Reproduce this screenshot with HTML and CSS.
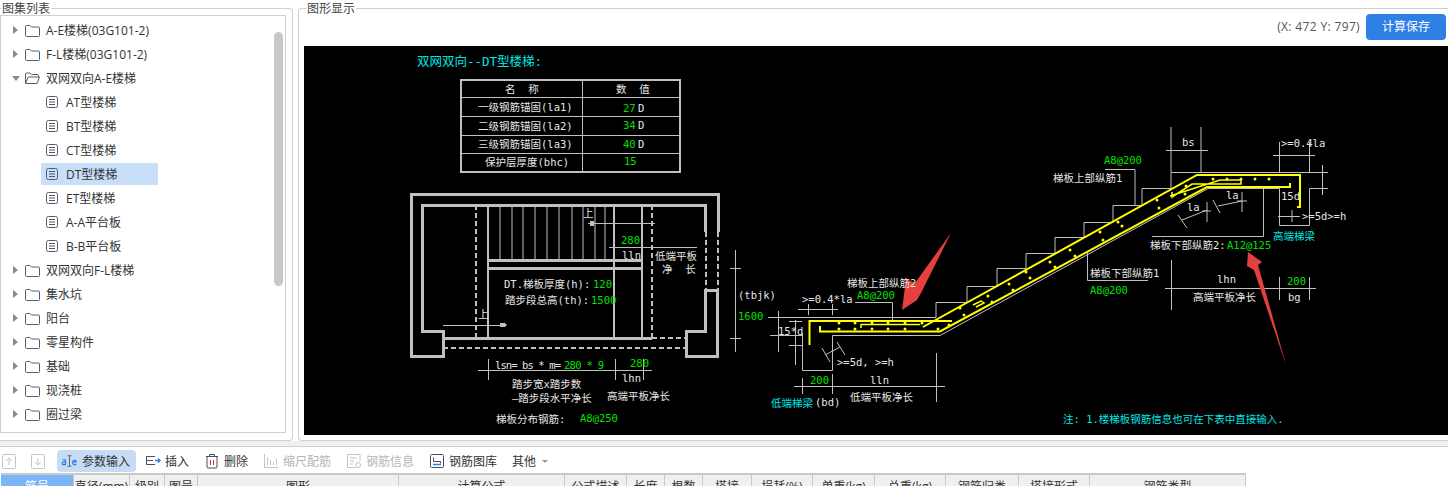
FILE: index.html
```html
<!DOCTYPE html>
<html lang="zh-CN">
<head>
<meta charset="utf-8">
<title>图集列表</title>
<link rel="stylesheet" href="styles.css">
</head>
<body>
<svg class="defs" aria-hidden="true">
  <symbol id="folder" viewBox="0 0 15 13"><path d="M.5 2.5a1 1 0 0 1 1-1H5l1.5 1.5h7a1 1 0 0 1 1 1v7.500a1 1 0 0 1-1 1h-12a1 1 0 0 1-1-1z" fill="none" stroke="#555a6a"/></symbol>
  <symbol id="folder-open" viewBox="0 0 15 13"><path d="M.5 11.500V2a1 1 0 0 1 1-1H5l1.500 1.500h6a1 1 0 0 1 1 1V5M.5 11.500h11.500L14.500 5H3.200z" fill="none" stroke="#555a6a"/></symbol>
  <symbol id="doc" viewBox="0 0 13 13"><rect x=".5" y=".5" width="11" height="11" rx="2" fill="none" stroke="#555a6a"/><path d="M3 3.500h6M3 6h6M3 8.500h6" stroke="#555a6a" fill="none"/></symbol>
</svg>
<main class="top">
  <fieldset class="panel panel-left">
    <legend class="panel-title">图集列表</legend>
    <div class="tree-box">
      <ul class="tree">
        <li class="node"><span class="caret"></span><svg class="ico-folder"><use href="#folder"/></svg><span class="label">A-E楼梯(03G101-2)</span></li>
        <li class="node"><span class="caret"></span><svg class="ico-folder"><use href="#folder"/></svg><span class="label">F-L楼梯(03G101-2)</span></li>
        <li class="node"><span class="caret caret-open"></span><svg class="ico-folder"><use href="#folder-open"/></svg><span class="label">双网双向A-E楼梯</span></li>
        <li class="node leaf"><span class="leaf-label"><svg class="ico-doc"><use href="#doc"/></svg><span class="label">AT型楼梯</span></span></li>
        <li class="node leaf"><span class="leaf-label"><svg class="ico-doc"><use href="#doc"/></svg><span class="label">BT型楼梯</span></span></li>
        <li class="node leaf"><span class="leaf-label"><svg class="ico-doc"><use href="#doc"/></svg><span class="label">CT型楼梯</span></span></li>
        <li class="node leaf"><span class="leaf-label selected"><svg class="ico-doc"><use href="#doc"/></svg><span class="label">DT型楼梯</span></span></li>
        <li class="node leaf"><span class="leaf-label"><svg class="ico-doc"><use href="#doc"/></svg><span class="label">ET型楼梯</span></span></li>
        <li class="node leaf"><span class="leaf-label"><svg class="ico-doc"><use href="#doc"/></svg><span class="label">A-A平台板</span></span></li>
        <li class="node leaf"><span class="leaf-label"><svg class="ico-doc"><use href="#doc"/></svg><span class="label">B-B平台板</span></span></li>
        <li class="node"><span class="caret"></span><svg class="ico-folder"><use href="#folder"/></svg><span class="label">双网双向F-L楼梯</span></li>
        <li class="node"><span class="caret"></span><svg class="ico-folder"><use href="#folder"/></svg><span class="label">集水坑</span></li>
        <li class="node"><span class="caret"></span><svg class="ico-folder"><use href="#folder"/></svg><span class="label">阳台</span></li>
        <li class="node"><span class="caret"></span><svg class="ico-folder"><use href="#folder"/></svg><span class="label">零星构件</span></li>
        <li class="node"><span class="caret"></span><svg class="ico-folder"><use href="#folder"/></svg><span class="label">基础</span></li>
        <li class="node"><span class="caret"></span><svg class="ico-folder"><use href="#folder"/></svg><span class="label">现浇桩</span></li>
        <li class="node"><span class="caret"></span><svg class="ico-folder"><use href="#folder"/></svg><span class="label">圈过梁</span></li>
        <li class="node"><span class="caret"></span><svg class="ico-folder"><use href="#folder"/></svg></li>
      </ul>
      <div class="scroll-thumb"></div>
    </div>
  </fieldset>
  <fieldset class="panel panel-right">
    <legend class="panel-title panel-title-right">图形显示</legend>
    <div class="view-bar">
      <span class="coords">(X: 472 Y: 797)</span>
      <button class="save-btn">计算保存</button>
    </div>
    <svg class="cad" viewBox="304 46 1144 389">
      <!-- parameter table -->
      <g class="wall">
        <rect x="460.500" y="79.500" width="219" height="92"/>
      </g>
      <g class="thin">
        <path d="M461 97.500H680M461 116.500H680M461 135.500H680M461 153.500H680M582.500 79V171"/>
      </g>
      <!-- plan -->
      <g class="wall plan-wall">
        <path d="M718 232V194.500H411V356.500H443V331.500H422V205.500H705.500V232"/>
        <path d="M705.500 290.500H717.500V356.500H686.500V331.500H705.500Z"/>
        <path d="M443 338H652M488 260H642M488 268H642"/>
      </g>
      <g class="wall-thin">
        <path d="M488 205V338M614 205V338M642 205V338"/>
      </g>
      <g class="wall-dash">
        <path d="M476 205V337M652 205V337M705.500 232V290M717.500 232V290M652 338H686M443 347.500H686"/>
      </g>
      <g class="thin">
        <path d="M500 205V260M512 205V260M523 205V260M535 205V260M547 205V260M559 205V260M572 205V260M583 205V260M595 205V260M605 205V260"/>
        <path d="M588 223.500H655M609 247.500H697M443 325.500H506M735.500 250V352M730 268.500H741M730 338.500H741"/>
        <path d="M478 370.500H652M488.500 359V380M615.500 359V380M643.500 359V380"/>
      </g>
      <text class="w" x="583" y="217">上</text><text class="w" x="478" y="318">上</text>
      <path class="mark" d="M500 323h5l2 2-2 2h-5zM590 221h4v5h-4z"/>
      <!-- section, steps and outlines -->
      <g class="thin">
        <path d="M768 317.500H936V302.500H967V286.500H997V268.500H1026V253.500H1055V237.500H1084V222.500H1113V205.500H1142V188.500H1171V172.500H1322"/>
        <path d="M770 335.500H802M802.500 333V370.500H832.500V335.500H940L1208 188.500H1279.500V225.500H1309.500V188.500H1322"/>
        <path d="M778.500 311V352M795.500 320V365M789 321.500H802M789 345.500H802"/>
        <path d="M855 302.500H892.500V320M798 309.500H838M808.500 304V315M832.500 304V315"/>
        <path d="M794 386.500H945M802.500 378V394M832.500 374V394M936.500 353V402"/>
        <path d="M825 355L840 347M822 348L830 362M837 342L845 355"/>
        <path d="M1105 169.500H1135V205M1171 127V172M1201 127V172M1166 150.500H1208M1273 155.500H1315M1279.500 142V172M1309.500 142V172"/>
        <path d="M1322.500 165V195M1316 172.500H1328M1316 188.500H1328M1278 216.500H1300M1292 210V222"/>
        <path d="M1152 236.500H1263.500V187M1087.500 253V280.500H1148M1165 288.500H1316M1171.500 260V310M1279.500 277V300M1309.500 277V300"/>
        <path d="M1182 220L1207 210M1178 215L1187 228M1207 202V222M1202 211H1211M1218 206L1242 201M1213 200L1220 213M1242 192V212M1237 201H1247"/>
      </g>
      <path class="rebar" d="M809.500 345V321H952M820 326V331.500H940L1207 187H1290V183M923 327L1197 175H1300V207H1297"/>
      <path class="rebar-thin" d="M861 328V324.500H920M973 305L981 301L984 303L976 307M1170 196L1220 180H1241V184H1192L1172 197L1172 192"/>
      <g class="dots">
        <circle cx="839" cy="323" r="1.500"/><circle cx="855" cy="323" r="1.500"/><circle cx="872" cy="323" r="1.500"/><circle cx="888" cy="323" r="1.500"/><circle cx="905" cy="323" r="1.500"/><circle cx="922" cy="323" r="1.500"/>
        <circle cx="839" cy="329" r="1.500"/><circle cx="855" cy="329" r="1.500"/><circle cx="872" cy="329" r="1.500"/><circle cx="888" cy="329" r="1.500"/><circle cx="905" cy="329" r="1.500"/><circle cx="938" cy="329" r="1.500"/>
        <circle cx="960" cy="308" r="1.500"/><circle cx="988" cy="296" r="1.500"/><circle cx="1009" cy="284" r="1.500"/><circle cx="1026" cy="272" r="1.500"/><circle cx="1030" cy="278" r="1.500"/><circle cx="1013" cy="290" r="1.500"/><circle cx="992" cy="302" r="1.500"/><circle cx="964" cy="315" r="1.500"/><circle cx="949" cy="325" r="1.500"/>
        <circle cx="1050" cy="262" r="1.500"/><circle cx="1070" cy="250" r="1.500"/><circle cx="1100" cy="232" r="1.500"/><circle cx="1118" cy="222" r="1.500"/><circle cx="1157" cy="200" r="1.500"/><circle cx="1186" cy="186" r="1.500"/>
        <circle cx="1055" cy="267" r="1.500"/><circle cx="1075" cy="256" r="1.500"/><circle cx="1103" cy="240" r="1.500"/><circle cx="1122" cy="226" r="1.500"/><circle cx="1159" cy="208" r="1.500"/><circle cx="1185" cy="194" r="1.500"/>
        <circle cx="1213" cy="179" r="1.500"/><circle cx="1227" cy="179" r="1.500"/><circle cx="1241" cy="179" r="1.500"/><circle cx="1255" cy="179" r="1.500"/><circle cx="1269" cy="179" r="1.500"/>
      </g>
      <!-- red annotation arrows -->
      <path class="arrow" d="M951 233L921 293L917 300L902 310L906 279L915 283Z"/>
      <path class="arrow" d="M1248 252L1262 262L1258 265L1286 365L1254 270L1247 266Z"/>
      <!-- texts -->
      <text class="c big" x="417" y="66">双网双向--DT型楼梯:</text>
      <text class="t" x="505" y="93">名  称</text>
      <text class="t" x="616" y="93">数  值</text>
      <text class="t" x="478" y="111">一级钢筋锚固(la1)</text><text class="g" x="623" y="112">27</text><text class="t" x="638" y="112">D</text>
      <text class="t" x="478" y="130">二级钢筋锚固(la2)</text><text class="g" x="623" y="129">34</text><text class="t" x="638" y="129">D</text>
      <text class="t" x="478" y="148">三级钢筋锚固(la3)</text><text class="g" x="623" y="148">40</text><text class="t" x="638" y="148">D</text>
      <text class="t" x="485" y="166">保护层厚度(bhc)</text><text class="g" x="624" y="165">15</text>
      <text class="g" x="621" y="244">280</text><text class="t" x="622" y="259">lln</text>
      <text class="t" x="655" y="260">低端平板</text><text class="t" x="662" y="273">净  长</text>
      <text class="t" x="504" y="288">DT.梯板厚度(h):</text><text class="g" x="593" y="288">120</text>
      <text class="t" x="505" y="304">踏步段总高(th):</text><text class="g" x="591" y="304">1500</text>
      <text class="t" x="738" y="299">(tbjk)</text><text class="g" x="738" y="320">1600</text>
      <text class="t tight" x="495" y="369">lsn= bs * m=</text><text class="g tighter" x="564" y="369">280 * 9</text>
      <text class="g" x="630" y="367">280</text><text class="t" x="622" y="382">lhn</text>
      <text class="t" x="512" y="388">踏步宽x踏步数</text><text class="t" x="512" y="402">—踏步段水平净长</text>
      <text class="t" x="607" y="400">高端平板净长</text>
      <text class="t" x="496" y="423">梯板分布钢筋:</text><text class="g" x="580" y="422">A8@250</text>
      <text class="t" x="847" y="287">梯板上部纵筋2</text><text class="g" x="857" y="299">A8@200</text>
      <text class="t" x="802" y="303">&gt;=0.4*la</text><text class="t" x="778" y="335">15*d</text>
      <text class="t" x="837" y="366">&gt;=5d, &gt;=h</text>
      <text class="g" x="810" y="384">200</text><text class="t" x="870" y="384">lln</text>
      <text class="c" x="771" y="407">低端梯梁</text><text class="t" x="815" y="406">(bd)</text>
      <text class="t" x="850" y="401">低端平板净长</text>
      <text class="g" x="1104" y="164">A8@200</text><text class="t" x="1053" y="182">梯板上部纵筋1</text>
      <text class="t" x="1182" y="146">bs</text><text class="t" x="1281" y="147">&gt;=0.4la</text>
      <text class="t" x="1281" y="200">15d</text><text class="t" x="1226" y="199">la</text><text class="t" x="1187" y="211">la</text>
      <text class="t" x="1302" y="220">&gt;=5d&gt;=h</text><text class="c" x="1273" y="240">高端梯梁</text>
      <text class="t" x="1150" y="249">梯板下部纵筋2:</text><text class="g" x="1227" y="249">A12@125</text>
      <text class="t" x="1090" y="277">梯板下部纵筋1</text><text class="g" x="1090" y="294">A8@200</text>
      <text class="t" x="1217" y="283">lhn</text><text class="g" x="1287" y="285">200</text><text class="t" x="1288" y="301">bg</text>
      <text class="t" x="1193" y="301">高端平板净长</text>
      <text class="c" x="1063" y="423">注: 1.楼梯板钢筋信息也可在下表中直接输入.</text>
    </svg>
  </fieldset>
</main>
<div class="splitter"></div>
<nav class="toolbar">
  <span class="tool square first"><svg class="ico" viewBox="0 0 16 16"><rect x="1.500" y="1.500" width="13" height="14" rx="1" class="ln-off"/><path d="M8 12V5M5 8l3-3 3 3" class="ln-off"/></svg></span>
  <span class="tool square second"><svg class="ico" viewBox="0 0 16 16"><rect x="1.500" y="1.500" width="13" height="14" rx="1" class="ln-off"/><path d="M8 5v7M5 9l3 3 3-3" class="ln-off"/></svg></span>
  <span class="tool active"><svg class="ico ico-wide" viewBox="0 0 21 16"><path d="M10.500 2v12M8 1.500h5M8 14.500h5" class="ln"/><path d="M2 6.500h3.500v6H3a1.500 1.500 0 0 1 0-3h2.500M19 9.500h-4.500a2.200 2.200 0 0 0 2.300 3H19M14.500 9.500a2.200 2.200 0 0 1 4.500 0" class="ln-blue"/></svg><span class="label">参数输入</span></span>
  <span class="tool"><svg class="ico" viewBox="0 0 16 16"><path d="M10 3.500H1.500v8H10M1.500 7.500H8" class="ln"/><path d="M10 7.500h5M13 5.500l2 2-2 2" class="ln-blue"/></svg><span class="label">插入</span></span>
  <span class="tool"><svg class="ico" viewBox="0 0 16 16"><path d="M2 3.500h12M5.500 3.500V1.500h5v2M3 3.500V14a1 1 0 0 0 1 1h8a1 1 0 0 0 1-1V3.500" class="ln"/><path d="M6.500 7v5M9.500 7v5" class="ln-red"/></svg><span class="label">删除</span></span>
  <span class="tool off"><svg class="ico" viewBox="0 0 16 16"><path d="M1.500 1v13.500H15M4.500 4v8M7.500 7v5M10.500 9v3M13.500 6v6" class="ln-off"/></svg><span class="label">缩尺配筋</span></span>
  <span class="tool off"><svg class="ico" viewBox="0 0 16 16"><path d="M14 8V1.500H1.500v13H9M4 5h7M4 8h4M4 11h3" class="ln-off"/><circle cx="12" cy="12" r="2.500" class="ln-off"/></svg><span class="label">钢筋信息</span></span>
  <span class="tool"><svg class="ico" viewBox="0 0 16 16"><rect x="1.500" y="1.500" width="13" height="13" rx="1" class="ln"/><path d="M4.500 4.500v4h7v2" class="ln"/><path d="M4 11.500h8" class="ln-blue"/></svg><span class="label">钢筋图库</span></span>
  <span class="tool"><span class="label">其他</span><span class="more"></span></span>
</nav>
<section class="grid-head">
  <div class="cell cell-active">筋号</div><div class="cell">直径(mm)</div><div class="cell">级别</div><div class="cell">图号</div><div class="cell">图形</div><div class="cell">计算公式</div><div class="cell">公式描述</div><div class="cell">长度</div><div class="cell">根数</div><div class="cell">搭接</div><div class="cell">损耗(%)</div><div class="cell">单重(kg)</div><div class="cell">总重(kg)</div><div class="cell">钢筋归类</div><div class="cell">搭接形式</div><div class="cell">钢筋类型</div>
</section>
</body>
</html>
```
FILE: styles.css
```css
* { box-sizing: border-box; }
html, body { margin: 0; height: 486px; overflow: hidden; background: #fff; }
body { font: 12px/1.2 "Open Sans", "Noto Sans CJK SC", sans-serif; color: #333; }
.defs { display: none; }
.label { padding-top: 2px; }

.top { display: flex; height: 441px; gap: 5px; }
.panel {
  margin: 1px 0 0;
  padding: 0;
  min-width: 0;
  height: 440px;
  border: 1px solid #cfcfcf;
  border-radius: 0 4px 4px 0;
}
.panel-left { width: 293px; border-left: 0; flex: none; padding-right: 6px; }
.panel-right { flex: 1; border-right: 0; padding-left: 5px; border-radius: 4px 0 0 4px; }
.panel-title { margin-left: 1px; padding: 0 1px; line-height: 16px; height: 14px; color: #444; }
.panel-title-right { margin-left: 2px; }

.tree-box {
  position: relative;
  height: 418px;
  border: 1px solid #cfcfcf;
  overflow: hidden;
}
.tree { list-style: none; margin: 0; padding: 2px 0 0; }
.node { display: flex; align-items: center; height: 24px; padding-left: 12px; }
.caret {
  width: 0; height: 0; margin-right: 7px;
  border-left: 5px solid #8a8a8a;
  border-top: 4px solid transparent;
  border-bottom: 4px solid transparent;
}
.caret-open {
  margin: 0 5px 0 -1px;
  border-left: 4px solid transparent;
  border-right: 4px solid transparent;
  border-top: 5px solid #8a8a8a;
  border-bottom: 0;
}
.ico-folder { width: 15px; height: 13px; margin-right: 6px; flex: none; }
.leaf { padding-left: 40px; }
.leaf-label { display: flex; align-items: center; width: 117px; height: 22px; padding-left: 5px; }
.selected { background: #c8dffa; }
.ico-doc { width: 13px; height: 13px; margin-right: 7px; flex: none; }
.scroll-thumb {
  position: absolute;
  left: 273px; top: 16px;
  width: 9px; height: 254px;
  border-radius: 5px;
  background: #c9c9c9;
}

.view-bar { display: flex; justify-content: flex-end; align-items: flex-start; gap: 6px; height: 32px; margin-top: -1px; padding-right: 2px; }
.coords { line-height: 26px; color: #555; letter-spacing: .35px; }
.save-btn {
  width: 80px; height: 26px;
  border: 0; border-radius: 4px;
  background: #2f80e6; color: #fff;
  font: inherit;
}
.cad { display: block; width: 1144px; height: 389px; background: #000; }
.cad text { font: 10.5px "DejaVu Sans Mono", "Noto Sans CJK SC", monospace; white-space: pre; }
.cad .big { font-size: 12.500px; }
.cad .tight { letter-spacing: -.9px; }
.cad .tighter { letter-spacing: -.7px; }
.t { fill: #e6e6e6; }
.w { fill: #e6e6e6; }
.g { fill: #00e000; }
.c { fill: #00e6e6; }
.wall path, .wall rect { fill: none; stroke: #c0c0c0; stroke-width: 2; shape-rendering: crispEdges; }
.plan-wall path { stroke-width: 3; }
.wall-thin path { fill: none; stroke: #c0c0c0; stroke-width: 1.500; shape-rendering: crispEdges; }
.wall-dash path { fill: none; stroke: #c0c0c0; stroke-width: 2; stroke-dasharray: 5 3; shape-rendering: crispEdges; }
.thin path { fill: none; stroke: #c0c0c0; stroke-width: 1; }
.mark { fill: #c0c0c0; }
.rebar { fill: none; stroke: #ffff00; stroke-width: 2; }
.rebar-thin { fill: none; stroke: #ffff00; stroke-width: 1.500; }
.dots circle { fill: #ffff00; }
.arrow { fill: #e5403e; }

.splitter { height: 6px; background: #f0f0f0; border-bottom: 1px solid #cfcfcf; }
.toolbar { display: flex; align-items: center; gap: 7px; height: 26px; padding: 2px 0 0 1px; white-space: nowrap; }
.tool { display: flex; align-items: center; gap: 4px; height: 22px; padding: 0 4px; border-radius: 4px; }
.square { padding: 0; }
.first { margin-right: 6px; }
.second { margin-right: 4px; }
.active { width: 79px; padding: 0 6px 0 4px; margin-right: -2px; background: #c5dcf4; gap: 0; justify-content: space-between; }
.off { color: #b5b5b5; }
.ico { width: 16px; height: 16px; flex: none; }
.ico-wide { width: 17px; }
.ln { fill: none; stroke: #484d5c; }
.ln-blue { fill: none; stroke: #2f80e6; stroke-width: 1.500; }
.ln-red { fill: none; stroke: #e02020; }
.ln-off { fill: none; stroke: #c4c4c4; }
.more { width: 0; height: 0; margin-left: 2px; border-left: 3px solid transparent; border-right: 3px solid transparent; border-top: 3px solid #999; }

.grid-head {
  display: grid;
  grid-template-columns: 73px 56px 35px 33px 201px 166px 62px 38px 38px 49px 61px 62px 71px 73px 71px 156px;
  width: 1245px;
  height: 24px;
  margin-left: 1px;
  border-top: 2px solid #c8c8c8;
  background: #f0f0f0;
}
.cell { display: flex; align-items: center; justify-content: center; padding-top: 2px; border-right: 1px solid #c8c8c8; }
.cell-active { background: #7ab6f7; color: #fff; }
```
